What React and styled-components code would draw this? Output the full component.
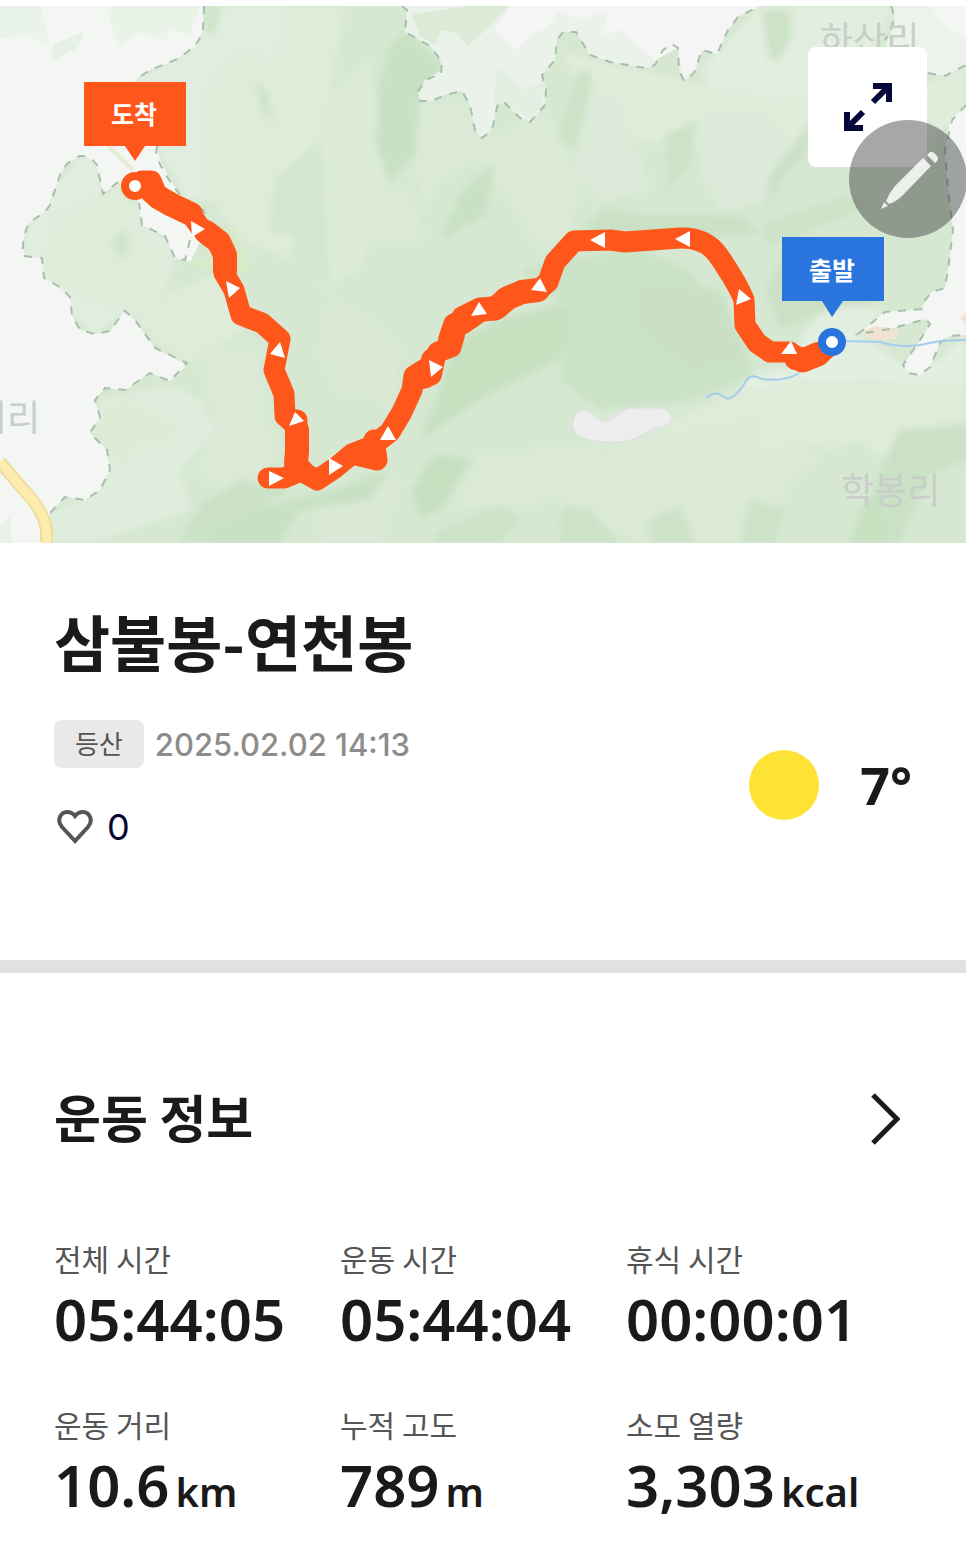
import React from "react";
import styled, { createGlobalStyle } from "styled-components";

const GlobalStyle = createGlobalStyle`
  *, *::before, *::after { box-sizing: border-box; }
  body {
    margin: 0;
    background: #fff;
    color: #1a1a1a;
    font-family: Inter, "Noto Sans CJK KR", sans-serif;
  }
`;

const Page = styled.main`
  width: 100%;
  padding-top: 6px;
`;

const MapPanel = styled.section`
  position: relative;
  overflow: hidden;
`;

const MapDrawing = styled.svg`
  display: block;
  width: 100%;
  height: auto;
`;

const PlaceName = styled.text`
  font: 400 36px "Noto Sans CJK KR", sans-serif;
  fill: #c8cec8;
`;

const FlagText = styled.text`
  font: 700 25px "Noto Sans CJK KR", sans-serif;
  fill: #fff;
  text-anchor: middle;
`;

const ExpandButton = styled.button`
  position: absolute;
  top: 41px;
  right: 39px;
  width: 119px;
  height: 120px;
  padding: 0;
  border: 0;
  border-radius: 8px;
  background: #fff;
  display: grid;
  place-items: center;
  cursor: pointer;
`;

const PenButton = styled.button`
  position: absolute;
  top: 114px;
  right: -1px;
  width: 118px;
  height: 118px;
  padding: 0;
  border: 0;
  border-radius: 50%;
  background: rgba(45, 42, 48, 0.42);
  display: grid;
  place-items: center;
  cursor: pointer;
`;

const Summary = styled.section`
  padding: 62px 54px 110px;
  border-bottom: 13px solid #e1e1e1;
`;

const Title = styled.h1`
  margin: 0 0 43px;
  font: 700 61px/72px "Noto Sans CJK KR", sans-serif;
`;

const SummaryRow = styled.div`
  display: flex;
  justify-content: space-between;
  align-items: center;
`;

const Meta = styled.div`
  display: flex;
  flex-direction: column;
  align-items: flex-start;
  gap: 36px;
`;

const MetaLine = styled.div`
  display: flex;
  align-items: center;
  gap: 11px;
`;

const Tag = styled.span`
  padding: 2px 21px 0;
  border-radius: 8px;
  background: #e9e9e9;
  color: #555;
  font-size: 26px;
  line-height: 46px;
`;

const DateText = styled.time`
  padding-top: 2px;
  color: #8c8c8c;
  font-size: 31px;
  font-weight: 500;
  line-height: 46px;
`;

const LikeButton = styled.button`
  display: flex;
  align-items: center;
  gap: 12px;
  padding: 0 0 0 3px;
  border: 0;
  background: none;
  color: #06062d;
  font: 400 36px/46px Inter, sans-serif;
  cursor: pointer;
`;

const Weather = styled.div`
  display: flex;
  align-items: center;
  gap: 41px;
  font: 700 52px/70px "Noto Sans", sans-serif;
`;

const Sun = styled.span`
  width: 70px;
  height: 70px;
  border-radius: 50%;
  background: #fee236;
`;

const Workout = styled.section`
  padding: 113px 54px 24px;
`;

const WorkoutHeader = styled.header`
  display: flex;
  justify-content: space-between;
  align-items: flex-start;
  margin-bottom: 92px;
`;

const Heading = styled.h2`
  margin: 0;
  font: 700 51px/60px "Noto Sans CJK KR", sans-serif;
`;

const MoreLink = styled.a`
  display: flex;
  padding: 6px 12px 0;
  color: #1a1a1a;
`;

const Stats = styled.dl`
  display: grid;
  grid-template-columns: repeat(3, 1fr);
  row-gap: 52px;
  margin: 0;
`;

const Stat = styled.div`
  display: flex;
  flex-direction: column;
  gap: 8px;
`;

const StatLabel = styled.dt`
  color: #555;
  font: 400 30px/40px "Noto Sans CJK KR", sans-serif;
`;

const StatValue = styled.dd`
  margin: 0;
  font: 600 58px/66px "Noto Sans", sans-serif;
  white-space: nowrap;
`;

const Unit = styled.span`
  margin-left: 6px;
  font-size: 40px;
`;

const STATS = [
  { label: "전체 시간", value: "05:44:05" },
  { label: "운동 시간", value: "05:44:04" },
  { label: "휴식 시간", value: "00:00:01" },
  { label: "운동 거리", value: "10.6", unit: "km" },
  { label: "누적 고도", value: "789", unit: "m" },
  { label: "소모 열량", value: "3,303", unit: "kcal" },
];

const TERRAIN = [
  // pale slopes
  ["#e4f0e3", "204,6 290,6 282,60 275,110 240,150 215,200 188,200 158,150 135,80 195,48"],
  ["#e0eddc", "290,6 345,6 330,90 340,140 300,190 290,260 240,240 205,190 200,100 235,50 275,60"],
  ["#e4f0e3", "22,245 27,225 60,180 83,155 97,165 103,194 138,205 142,225 165,236 175,258 165,290 130,310 95,334 72,315 44,278"],
  ["#e0eddb", "60,215 110,190 118,182 140,230 165,250 160,300 185,340 160,345 130,312 90,300 45,275 50,230"],
  ["#e0eddb", "130,312 220,270 245,330 210,350 190,365 160,345"],
  ["#e2efe0", "100,400 170,385 200,400 215,430 180,470 190,510 90,543 50,543 50,515 105,485 108,450 92,433"],
  ["#dfecd9", "100,410 125,395 185,430 165,450 140,445 125,470 95,440"],
  ["#e5f0e3", "700,70 720,50 760,6 893,6 870,60 840,90 780,100 755,110 730,100 715,92"],
  ["#e2eedd", "560,50 590,60 640,70 690,82 760,95 800,100 835,90 880,100 940,78 966,65 966,110 920,150 850,160 780,150 740,130 690,150 640,140 600,120"],
  ["#e7f1e5", "800,340 830,300 885,312 858,334 903,365 930,367 966,335 966,390 870,380 780,385 740,392 750,375 800,365"],
  ["#e0eddb", "640,435 730,395 800,380 966,385 966,420 920,430 900,470 860,440 830,450 800,440 760,450 700,440 660,455 640,450"],
  ["#ddebd8", "640,450 700,440 760,450 800,440 820,460 790,480 760,543 640,543"],
  ["#dcebd8", "460,500 480,455 640,440 760,420 760,480 700,500 640,543 560,500 450,510"],
  ["#dbead8", "585,380 600,350 640,340 655,330 660,400 630,410 600,470"],
  ["#deecdb", "570,295 600,310 640,310 625,370 615,410 595,370"],
  ["#ddecd9", "320,110 370,60 385,180 360,270 320,290"],
  ["#dcebd9", "420,100 470,105 540,200 560,240 530,220 490,150 440,180 425,210 415,160"],
  ["#dcebd8", "470,150 545,110 580,180 570,230 540,250 510,200"],
  ["#dcebd9", "320,190 410,190 425,240 355,245 320,225"],
  ["#dbebd9", "200,350 260,345 265,420 280,450 240,500 195,470 215,430"],
  ["#dbead8", "330,300 370,320 400,350 390,400 340,390 320,350"],
  ["#dbead8", "320,480 400,480 380,543 320,543"],
  ["#deecdb", "590,90 620,100 650,190 600,200 575,170"],
  ["#deecdb", "700,110 760,110 790,140 770,200 720,210 700,170"],
  // deeper valleys
  ["#c5dfc0", "390,45 405,32 440,60 442,72 420,100 415,155 390,182 376,145 380,80"],
  ["#cae2c5", "590,72 592,85 575,150 560,140 562,120 580,70"],
  ["#c5dfc0", "494,165 485,215 440,240 460,195 475,178"],
  ["#cae2c5", "665,135 698,120 690,165 667,193"],
  ["#cae2c5", "762,10 790,10 792,35 780,60 770,60 765,35"],
  ["#c8e0c4", "765,210 770,175 812,120 808,150 785,175"],
  ["#cae2c5", "256,80 268,95 273,125 262,110"],
  ["#d2e7ce", "275,180 320,140 330,290 300,240 270,230"],
  ["#c8e0c3", "585,225 605,208 640,215 740,215 760,235 640,240 590,250"],
  ["#cbe2c6", "760,225 850,195 870,205 800,235 770,245"],
  ["#c8e0c3", "790,240 870,240 880,300 830,310 780,330 765,290"],
  ["#c3dfbc", "500,320 580,300 560,360 480,400 420,440 440,390 455,340"],
  ["#c8e1c3", "520,270 560,260 640,250 690,270 720,320 740,350 755,375 690,400 600,410 560,380 570,310"],
  ["#c6dfc1", "640,280 720,290 750,360 690,370 640,330"],
  ["#c1ddbb", "412,490 435,455 470,460 440,510 420,518"],
  ["#c5dfc0", "180,540 215,520 330,490 390,470 370,500 300,510 280,543 230,543"],
  ["#c8e0c3", "200,505 240,480 290,490 240,520 180,543"],
  ["#c8e0c3", "860,543 880,470 900,430 966,425 966,460 930,475 900,543"],
  ["#c3dfbc", "850,543 862,505 880,490 885,543"],
  ["#cbe2c6", "740,543 750,500 785,508 775,543"],
  ["#cbe2c6", "648,520 680,505 695,543 650,543"],
  ["#cbe2c6", "440,530 500,505 520,520 500,543 430,543"],
  ["#cbe2c6", "560,520 565,505 590,510 620,543 560,543"],
  ["#cde4c9", "112,240 126,230 128,258 116,255"],
  ["#cde4c9", "205,6 222,6 215,35 203,32"],
  ["#d8ebc0", "228,228 236,226 238,245 250,265 246,274 225,272 194,266 195,260 222,258"],
];

// areas outside the park boundary
const OUTSIDE = {
  west:
    "0,6 204,6 203,30 195,48 175,60 150,70 135,80 157,146 160,160 170,180 185,200 203,210 209,225 190,262 175,258 165,236 142,225 138,200 118,182 103,194 97,165 83,155 65,165 55,190 45,212 27,225 22,245 25,256 42,258 44,278 60,287 70,297 72,315 80,330 95,334 110,331 118,320 125,311 135,320 155,348 187,365 170,381 150,373 125,390 105,388 95,400 100,417 90,433 107,450 110,470 100,490 85,500 65,497 50,513 50,543 0,543",
  north:
    "402,6 407,10 405,32 430,46 440,58 442,70 425,80 418,92 420,101 432,101 445,95 462,91 470,105 475,130 482,138 492,130 498,103 505,103 520,118 530,122 545,105 546,90 542,75 555,60 557,40 563,32 576,32 590,55 610,62 645,68 655,65 663,50 672,44 678,48 679,70 684,81 694,73 702,50 717,54 728,30 738,17 760,6",
  northEast: "893,6 895,25 885,45 900,68 928,73 945,76 966,65 966,6",
  east:
    "966,105 950,120 945,150 948,190 953,230 948,270 945,288 932,292 925,300 922,309 885,312 858,334 890,329 926,319 930,324 920,340 903,365 908,373 920,375 930,367 940,343 950,336 966,335",
};

const BOUNDARIES = [
  "M204 6L203 30Q200 46 175 60L150 70L135 80",
  "M157 146L156 155Q166 180 185 200L203 210L209 225",
  "M190 240L185 260L175 258L165 236L142 225L139 203",
  "M118 182L103 194L97 165Q90 155 80 156Q65 162 60 175L50 205L45 212L30 222Q22 234 23 256L42 258L44 278L60 287L70 297L72 315L80 330L95 334L110 331L118 320L125 311L135 320L155 348L187 363L170 381L150 373L125 390L105 388L95 400L100 417L90 433L107 450L110 470L100 490L85 500L65 497L50 513",
  "M402 6L407 10L405 32L430 46L442 62L441 74L425 80L418 92L420 101L432 101L445 95L462 91L470 105L475 130L482 138L492 130L498 103L505 103L520 118L530 122L545 105L546 90L542 75L555 60L557 40L563 32L576 32L590 55L610 62L645 68L655 65L663 50L672 44L678 48L679 70L684 81L694 73L702 50L717 54L728 30L738 17L760 6",
  "M891 6Q898 20 885 40",
  "M928 73L945 76L966 65",
  "M966 105L952 120L945 150L948 190L953 230L948 270L945 288L932 292L925 300L922 309L885 312L858 334L890 329L926 319L930 324L920 340L903 365L908 373L920 375L930 367L940 343L950 336L966 335",
];

const ROUTE =
  "M136 186L142 181L151 181L157 195L170 205L190 213L200 227L217 240L225 255L224 273L234 290L241 315L262 323L280 339L274 370L284 394L285 416L295 425L297 445L295 465L303 472L317 480L335 468L352 454L372 446L390 432L402 412L412 390L414 376L430 366L438 352L451 347L457 325L462 317L480 308L495 310L505 298L520 292L537 291L548 282L555 262L574 241L610 240L625 242L680 238Q705 237 718 255Q738 284 744 300L745 325L757 343L770 352L790 352L802 362L818 356L832 343";
const SPURS = "M268 478L284 478L303 470M352 454L377 460L374 440M291 420L297 420L296 460M425 378L414 380";
// stretches where the track doubles back on itself
const WIDE_SPANS =
  "M144 184L158 197L172 205L191 214M206 232L219 242L225 255L225 270M297 430L297 436L297 452L296 462M430 374L433 360M450 340L455 325M463 322L480 310L496 308L508 298L522 292L538 290M796 358L804 360L818 354";

const ARROWS = [
  "191,221 205,229 192,237",
  "226,281 240,288 229,298",
  "280,342 270,354 285,358",
  "295,412 289,426 304,421",
  "269,471 284,478 269,486",
  "329,458 343,466 329,475",
  "388,426 380,440 396,440",
  "429,360 443,367 431,377",
  "479,302 471,316 487,314",
  "540,278 531,290 547,292",
  "590,240 605,232 605,248",
  "675,239 690,231 690,247",
  "739,289 736,305 751,299",
  "791,341 781,354 797,354",
];

function TrailMap() {
  return (
    <MapDrawing viewBox="0 6 966 537" role="img" aria-label="등산 경로 지도">
      <defs>
        <filter id="shade" x="-5%" y="-5%" width="110%" height="110%">
          <feGaussianBlur stdDeviation="3" />
        </filter>
      </defs>
      <rect y="6" width="966" height="537" fill="#d6e8d2" />
      <g filter="url(#shade)" opacity="0.8">
        {TERRAIN.map(([fill, points]) => (
          <polygon key={points} fill={fill} points={points} />
        ))}
      </g>

      <polygon fill="#f4f6f4" points={OUTSIDE.west} />
      <polygon fill="#eaf3e9" points="0,6 40,6 50,45 25,35 0,38" />
      <polygon fill="#e6f1e5" points="52,45 85,31 78,48 53,60" />
      <polygon fill="#e9f3e8" points="108,6 200,6 190,35 170,30 165,42 140,32 120,46 110,25" />
      <polygon fill="#e8f2e6" points="0,525 10,515 12,543 0,543" />
      <polygon fill="#eaf2e9" points={OUTSIDE.north} />
      <polygon fill="#f4f5f4" points="510,6 760,6 738,17 728,30 717,54 702,50 694,73 684,75 678,48 655,60 620,30 600,35 610,10 580,20 560,10 545,30 535,32 515,50 495,30" />
      <polygon fill="#dcebd8" points="412,15 465,6 510,6 468,46 455,32 442,30 435,45 420,36" />
      <polygon fill="#e4efe3" points="497,65 525,90 545,80 542,105 530,120 505,102 494,103" />
      <polygon fill="#ebf3ea" points={OUTSIDE.northEast} />
      <polygon fill="#f4f6f4" points="930,6 966,6 966,40 945,25" />
      <polygon fill="#f3f6f3" points={OUTSIDE.east} />
      <polygon fill="#f0e3d2" points="858,334 875,326 898,329 896,339 875,340" />
      <polygon fill="#f3e2d8" points="966,312 960,318 966,326" />

      <path d="M0 462Q15 480 30 497Q50 520 46 543" fill="none" stroke="#efdda0" strokeWidth="13" />
      <path d="M0 462Q15 480 30 497Q50 520 46 543" fill="none" stroke="#fdecae" strokeWidth="9" />
      <path d="M108 146L133 170" stroke="#e4edd3" strokeWidth="4" />

      <path
        d="M573 422Q575 410 585 411C595 412 596 423 608 421C620 417 620 408 635 408L660 408Q674 411 671 421Q666 428 652 429C638 438 630 442 612 442Q570 442 573 422Z"
        fill="#ededee"
        stroke="#dfe0df"
      />

      <g fill="none" stroke="#a9bfae" strokeWidth="2" strokeDasharray="8 8">
        {BOUNDARIES.map((d) => (
          <path key={d} d={d} />
        ))}
      </g>

      <g fill="none" stroke="#a3cdea" strokeWidth="2">
        <path d="M706 398Q712 392 719 394L728 399Q738 396 748 378Q753 374 762 379Q785 382 799 373" />
        <path d="M846 341L880 342Q900 348 920 345L940 341L966 340" />
      </g>

      <PlaceName x="820" y="53">하산리</PlaceName>
      <PlaceName x="841" y="504">학봉리</PlaceName>
      <PlaceName x="-26" y="431">이리</PlaceName>

      <g fill="none" stroke="#ff561b" strokeLinecap="round" strokeLinejoin="round">
        <path d={ROUTE} strokeWidth="21" />
        <path d={SPURS} strokeWidth="21" />
        <path d={WIDE_SPANS} strokeWidth="24" />
      </g>
      <g fill="#fff">
        {ARROWS.map((points) => (
          <polygon key={points} points={points} />
        ))}
      </g>

      <circle cx="135" cy="186" r="10" fill="#fff" stroke="#ff561b" strokeWidth="8" />
      <path d="M84 82H186V146H145L135 161L125 146H84Z" fill="#ff561b" />
      <FlagText x="134" y="124">도착</FlagText>

      <circle cx="832" cy="342" r="10" fill="#fff" stroke="#2a74dd" strokeWidth="8" />
      <path d="M782 237H884V301H843L832 317L822 301H782Z" fill="#2a74dd" />
      <FlagText x="832" y="280">출발</FlagText>
    </MapDrawing>
  );
}

function ExpandIcon() {
  return (
    <svg width="50" height="50" viewBox="0 0 50 50" fill="none" stroke="#07083a" strokeWidth="6" aria-hidden="true">
      <path d="M30 4H46V20M45 5L30 20" />
      <path d="M20 46H4V30M5 45L20 30" />
    </svg>
  );
}

function PenIcon() {
  return (
    <svg width="118" height="118" viewBox="849 120 118 118" fill="#fff" fillOpacity="0.84" aria-hidden="true">
      <path d="M923 158L931 166L903 195Q896 202 889 204L886 201Q889 193 895 186Z" />
      <path d="M927 155L930 152Q933 151 937 156Q939 160 937 161L935 163Z" />
      <path d="M884 202L888 206L881 209Z" />
    </svg>
  );
}

function HeartIcon() {
  return (
    <svg width="38" height="36" viewBox="0 0 38 36" fill="none" stroke="#555" strokeWidth="4" aria-hidden="true">
      <path d="M18 32L5 18C-1 11 4 3 10 3Q15 3 18 7Q21 3 26 3C32 3 37 11 31 18Z" />
    </svg>
  );
}

function ChevronIcon() {
  return (
    <svg width="32" height="54" viewBox="0 0 32 54" fill="none" stroke="currentColor" strokeWidth="5" aria-hidden="true">
      <path d="M5 3L29 27L5 51" />
    </svg>
  );
}

export default function App() {
  return (
    <>
      <GlobalStyle />
      <Page>
        <MapPanel>
          <TrailMap />
          <ExpandButton type="button" aria-label="지도 확대">
            <ExpandIcon />
          </ExpandButton>
          <PenButton type="button" aria-label="펜">
            <PenIcon />
          </PenButton>
        </MapPanel>

        <Summary>
          <Title>삼불봉-연천봉</Title>
          <SummaryRow>
            <Meta>
              <MetaLine>
                <Tag>등산</Tag>
                <DateText dateTime="2025-02-02T14:13">2025.02.02 14:13</DateText>
              </MetaLine>
              <LikeButton type="button" aria-label="좋아요 0">
                <HeartIcon />0
              </LikeButton>
            </Meta>
            <Weather>
              <Sun />
              7°
            </Weather>
          </SummaryRow>
        </Summary>

        <Workout>
          <WorkoutHeader>
            <Heading>운동 정보</Heading>
            <MoreLink href="#workout" aria-label="운동 정보 더보기">
              <ChevronIcon />
            </MoreLink>
          </WorkoutHeader>
          <Stats>
            {STATS.map(({ label, value, unit }) => (
              <Stat key={label}>
                <StatLabel>{label}</StatLabel>
                <StatValue>
                  {value}
                  {unit && <Unit>{unit}</Unit>}
                </StatValue>
              </Stat>
            ))}
          </Stats>
        </Workout>
      </Page>
    </>
  );
}
